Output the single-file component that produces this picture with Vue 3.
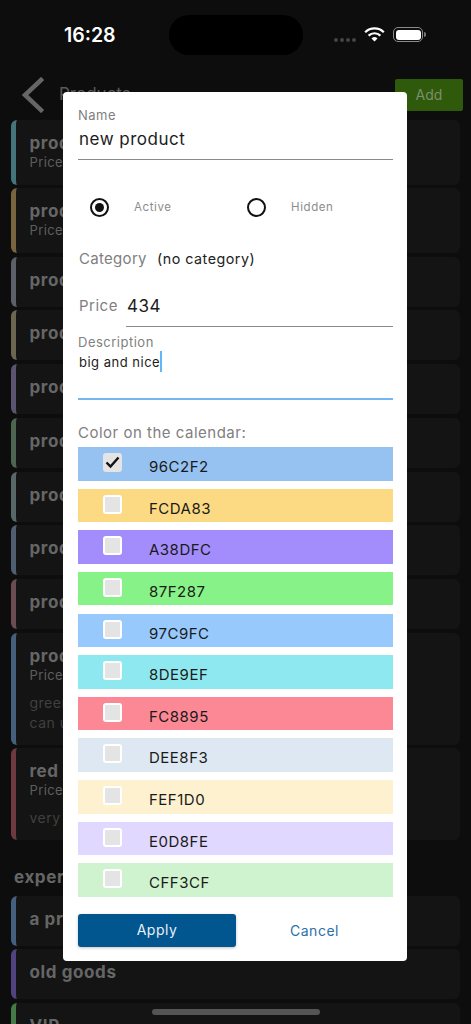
<script setup>
const groupOne = [
  { title: 'product 1', price: 'Price: 100', bar: '#44757a', h: 64.7 },
  { title: 'product 2', price: 'Price: 200', bar: '#786540', h: 64.7 },
  { title: 'product 3', bar: '#5c6068', h: 50 },
  { title: 'product 4', bar: '#6b6650', h: 50 },
  { title: 'product 5', bar: '#5a5470', h: 50 },
  { title: 'product 6', bar: '#4e6650', h: 50 },
  { title: 'product 7', bar: '#586866', h: 50 },
  { title: 'product 8', bar: '#4f5e70', h: 50 },
  { title: 'product 9', bar: '#6a4c52', h: 50 },
  { title: 'product 10', price: 'Price: 300', desc: ['green and', 'can use'], bar: '#44607c', h: 112 },
  { title: 'red apple', price: 'Price: 50', desc: ['very tasty'], bar: '#6e3a40', h: 92 }
]
const groupTwo = [
  { title: 'a product', bar: '#45607f', h: 50 },
  { title: 'old goods', bar: '#504480', h: 50 },
  { title: 'VIP', bar: '#437a45', h: 50 }
]
const colors = [
  { hex: '96C2F2', checked: true },
  { hex: 'FCDA83' },
  { hex: 'A38DFC' },
  { hex: '87F287' },
  { hex: '97C9FC' },
  { hex: '8DE9EF' },
  { hex: 'FC8895' },
  { hex: 'DEE8F3' },
  { hex: 'FEF1D0' },
  { hex: 'E0D8FE' },
  { hex: 'CFF3CF' }
]
</script>

<template>
  <div class="screen">
    <div class="status">
      <span class="time">16:28</span>
      <span class="island"></span>
      <span class="status-icons">
        <span class="dots"><i></i><i></i><i></i><i></i></span>
        <svg class="wifi" width="21" height="15" viewBox="0 0 21 15" fill="none" stroke="#fff" stroke-width="2.2">
          <path d="M1.2 5.2a13.4 13.4 0 0 1 18.6 0" />
          <path d="M4.6 8.6a8.6 8.6 0 0 1 11.8 0" />
          <path d="M10.5 14.4l-3-3a4.3 4.3 0 0 1 6 0z" fill="#fff" stroke="none" />
        </svg>
        <span class="battery"><span class="battery-fill"></span></span>
        <span class="battery-tip"></span>
      </span>
    </div>

    <header class="topbar">
      <svg class="back" width="24" height="36" viewBox="0 0 24 36" fill="none" stroke="#666" stroke-width="4.5" stroke-linecap="square">
        <path d="M20 3L4 18l16 15" />
      </svg>
      <span class="page-title">Products</span>
      <span class="add">Add</span>
    </header>

    <div class="list">
      <div v-for="p in groupOne" :key="p.title" class="card" :style="{ height: p.h + 'px', borderLeftColor: p.bar }">
        <div class="card-title">{{ p.title }}</div>
        <div v-if="p.price" class="card-price">{{ p.price }}</div>
        <div v-if="p.desc" class="card-desc">
          <div v-for="line in p.desc" :key="line">{{ line }}</div>
        </div>
      </div>
      <div class="group-title">experts</div>
      <div v-for="p in groupTwo" :key="p.title" class="card" :style="{ height: p.h + 'px', borderLeftColor: p.bar }">
        <div class="card-title">{{ p.title }}</div>
      </div>
    </div>

    <div class="modal">
      <div class="field name-field">
        <div class="label small">Name</div>
        <div class="value large">new product</div>
      </div>

      <div class="radios">
        <div class="radio-item">
          <span class="radio on"><span class="radio-dot"></span></span>
          <span class="radio-label">Active</span>
        </div>
        <div class="radio-item">
          <span class="radio"></span>
          <span class="radio-label">Hidden</span>
        </div>
      </div>

      <div class="category">
        <span class="label category-label">Category</span>
        <span class="category-value">(no category)</span>
      </div>

      <div class="price">
        <span class="label price-label">Price</span>
        <span class="value large price-value">434</span>
      </div>

      <div class="description">
        <div class="label small">Description</div>
        <div class="desc-value"><span>big and nice</span><span class="caret"></span></div>
      </div>

      <div class="label calendar-label">Color on the calendar:</div>
      <div class="colors">
        <div v-for="c in colors" :key="c.hex" class="color-row" :style="{ background: '#' + c.hex }">
          <span class="check" :class="{ checked: c.checked }">
            <svg v-if="c.checked" width="15" height="13" viewBox="0 0 15 13" fill="none" stroke="#111" stroke-width="2.4">
              <path d="M1.5 6.5l4 4 8-9" />
            </svg>
          </span>
          <span class="hex">{{ c.hex }}</span>
        </div>
      </div>

      <div class="actions">
        <div class="apply">Apply</div>
        <div class="cancel">Cancel</div>
      </div>
    </div>

    <div class="home"></div>
  </div>
</template>

<style scoped>
.screen {
  position: relative;
  width: 471px;
  height: 1024px;
  overflow: hidden;
  background: #0d0d0d;
  font-family: Inter, "Liberation Sans", sans-serif;
}
.status {
  height: 69px;
  display: flex;
  align-items: center;
  padding: 0 0 0 64px;
}
.time {
  color: #fff;
  font-size: 19.5px;
  font-weight: 600;
  width: 105px;
  margin-top: 1px;
}
.island {
  width: 134px;
  height: 40px;
  border-radius: 20px;
  background: #000;
}
.status-icons {
  margin-left: 31px;
  display: flex;
  align-items: center;
}
.dots {
  display: flex;
  gap: 2px;
  margin-top: 10px;
  margin-right: 8px;
}
.dots i {
  width: 4px;
  height: 4px;
  border-radius: 50%;
  background: #444;
}
.wifi {
  margin-right: 8px;
}
.battery {
  width: 30px;
  height: 15px;
  box-sizing: border-box;
  border: 1px solid #8a8a8a;
  border-radius: 5px;
  padding: 1.5px;
  display: flex;
}
.battery-fill {
  flex: 1;
  background: #fff;
  border-radius: 3px;
}
.battery-tip {
  width: 2px;
  height: 5px;
  margin-left: 1px;
  background: #777;
  border-radius: 0 2px 2px 0;
}
.topbar {
  height: 51px;
  display: flex;
  align-items: center;
  padding: 0 8px 0 21px;
}
.back {
  margin-right: 14px;
}
.page-title {
  flex: 1;
  color: #5a5a5a;
  font-size: 17px;
  margin-bottom: 2px;
}
.add {
  width: 68px;
  height: 32px;
  line-height: 32px;
  text-align: center;
  background: #2f5a0b;
  color: #7d8f6c;
  border-radius: 2px;
  font-size: 14px;
}
.list {
  padding: 0 11px;
  display: flex;
  flex-direction: column;
  gap: 3.7px;
}
.card {
  flex: none;
  box-sizing: border-box;
  border-left: 5.5px solid;
  border-radius: 6px;
  background: #141414;
  padding: 11px 0 0 13.5px;
}
.card-title {
  color: #666;
  font-size: 17px;
  font-weight: 700;
  line-height: 24px;
  letter-spacing: 0.6px;
}
.card-price {
  color: #5e5e5e;
  font-size: 13px;
  line-height: 15px;
  letter-spacing: 0.4px;
}
.card-desc {
  margin-top: 10px;
  color: #404040;
  font-size: 14px;
  line-height: 20px;
  letter-spacing: 0.5px;
}
.group-title {
  margin-top: 21px;
  margin-bottom: 3px;
  color: #666;
  font-size: 17px;
  font-weight: 700;
  line-height: 24px;
  padding-left: 3px;
  letter-spacing: 0.6px;
}
.modal {
  position: absolute;
  left: 63px;
  top: 92px;
  width: 344px;
  height: 869px;
  box-sizing: border-box;
  background: #fff;
  border-radius: 4px;
  padding: 15px 14px 0 15px;
  color: #222;
  letter-spacing: 0.5px;
}
.label {
  color: #808080;
  font-size: 15px;
}
.small {
  font-size: 13px;
  line-height: 16px;
}
.large {
  font-size: 17px;
  color: #1c1c1c;
}
.name-field {
  height: 53px;
  box-sizing: border-box;
  border-bottom: 1px solid #8a8a8a;
}
.name-field .value {
  line-height: 32px;
  padding-left: 1px;
}
.radios {
  display: flex;
  margin-top: 37px;
  height: 20px;
  padding-left: 12px;
}
.radio-item {
  flex: none;
  width: 157px;
  display: flex;
  align-items: center;
}
.radio {
  flex: none;
  width: 19px;
  height: 19px;
  box-sizing: border-box;
  border: 2px solid #111;
  border-radius: 50%;
  display: flex;
  align-items: center;
  justify-content: center;
  margin-right: 25px;
}
.radio-dot {
  width: 9px;
  height: 9px;
  border-radius: 50%;
  background: #111;
}
.radio-label {
  color: #8c8c8c;
  font-size: 11.5px;
  letter-spacing: 0.6px;
}
.category {
  display: flex;
  align-items: center;
  margin-top: 31px;
  height: 20px;
  padding-left: 1px;
}
.category-label {
  letter-spacing: 0.3px;
  width: 78px;
  flex: none;
}
.category-value {
  font-size: 14.3px;
  color: #222;
}
.price {
  display: flex;
  margin-top: 10px;
  height: 49px;
}
.price-label {
  padding: 18px 0 0 1px;
  line-height: 20px;
  width: 47px;
  flex: none;
}
.price-value {
  flex: 1;
  box-sizing: border-box;
  border-bottom: 1px solid #8a8a8a;
  line-height: 30px;
  padding: 13px 0 0 1px;
}
.description {
  height: 66px;
  box-sizing: border-box;
  margin-top: 7px;
  border-bottom: 2px solid #74b6f2;
}
.desc-value {
  display: flex;
  align-items: center;
  font-size: 13px;
  height: 21px;
  margin-top: 1px;
  padding-left: 1px;
  color: #1c1c1c;
}
.caret {
  width: 2px;
  height: 21px;
  background: #64b5f6;
}
.calendar-label {
  margin-top: 23px;
  line-height: 20px;
}
.colors {
  margin-top: 4px;
  display: flex;
  flex-direction: column;
  gap: 8.15px;
}
.color-row {
  height: 33.5px;
  display: flex;
  padding-left: 25px;
}
.check {
  width: 19px;
  height: 19px;
  margin-top: 6px;
  box-sizing: border-box;
  border: 2px solid #fff;
  border-radius: 3px;
  background: #e4e4e4;
  display: flex;
  align-items: center;
  justify-content: center;
}
.check.checked {
  border-color: #e4e4e4;
}
.hex {
  margin-left: 27px;
  font-size: 15px;
  line-height: 40px;
  color: #1a1a1a;
}
.actions {
  margin-top: 17px;
  display: flex;
  align-items: center;
}
.apply {
  width: 158px;
  height: 33px;
  line-height: 32px;
  text-align: center;
  background: #01568f;
  color: #e8f0f6;
  border-radius: 3px;
  font-size: 14px;
  box-shadow: 0 1px 3px rgba(0, 0, 0, 0.25);
}
.cancel {
  flex: 1;
  text-align: center;
  color: #2a70ad;
  font-size: 14px;
}
.home {
  position: absolute;
  left: 152px;
  top: 1009px;
  width: 168px;
  height: 6px;
  border-radius: 3px;
  background: #555;
}
</style>
